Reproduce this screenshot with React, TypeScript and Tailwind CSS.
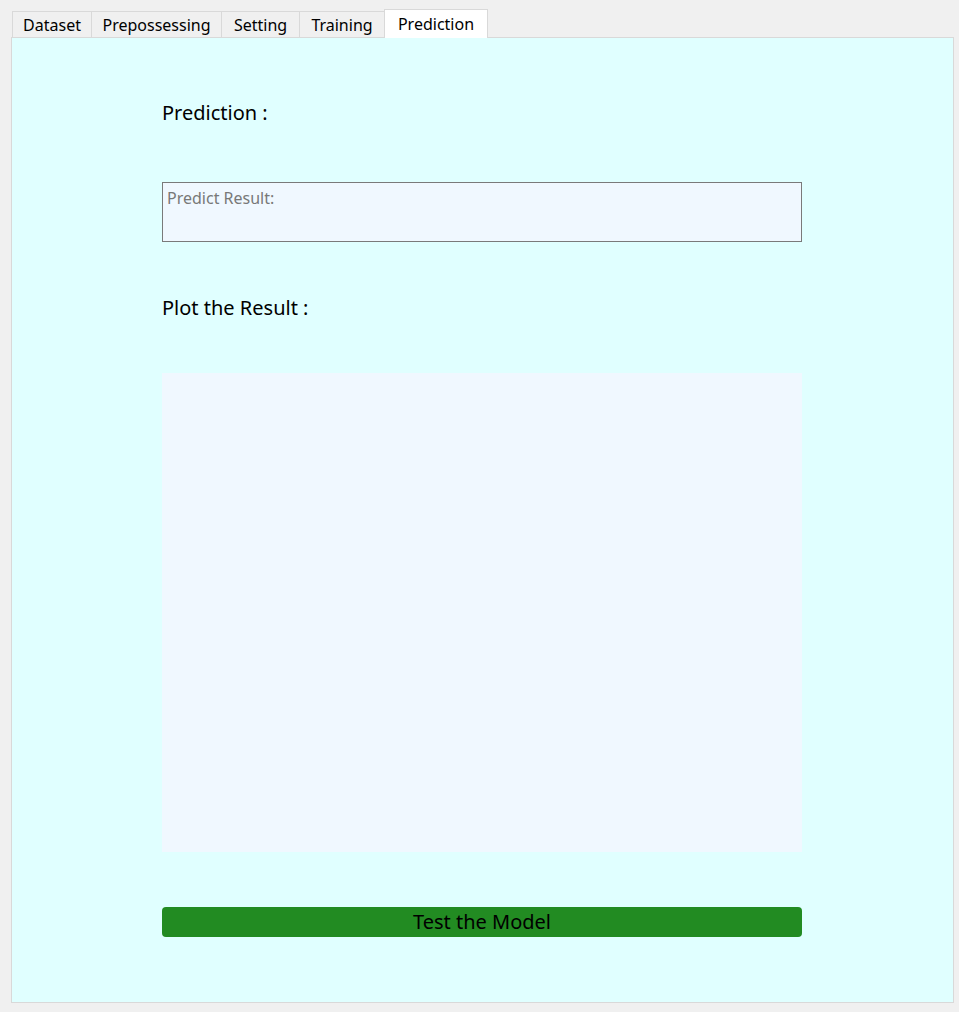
const tabs = [
  { name: 'Dataset', w: 'w-[80px]' },
  { name: 'Prepossessing', w: 'w-[131px]' },
  { name: 'Setting', w: 'w-[79px]' },
  { name: 'Training', w: 'w-[86px]' },
  { name: 'Prediction', w: 'w-[104px]' },
];

const App = () => {
  const active = 'Prediction';

  return (
    <div
      className="h-[1012px] w-[959px] bg-[#f0f0f0] pl-[11px] pt-[8px] text-black"
      style={{ fontFamily: '"Noto Sans", "Open Sans", sans-serif' }}
    >
      {/* tab strip */}
      <div className="flex h-[29px] items-end pl-[1px]">
        {tabs.map(t =>
          t.name === active ? (
            <div
              key={t.name}
              className={`relative z-10 -mb-[1px] -ml-[1px] flex h-[29px] items-center justify-center border border-b-0 border-[#d9d9d9] bg-white pb-[1px] text-[16px] ${t.w}`}
            >
              {t.name}
            </div>
          ) : (
            <div
              key={t.name}
              className={`-ml-[1px] flex h-[26px] items-center justify-center border border-b-0 border-[#d9d9d9] bg-[#f0f0f0] text-[16px] first:ml-0 ${t.w}`}
            >
              {t.name}
            </div>
          )
        )}
      </div>

      {/* panel */}
      <div className="h-[966px] w-[943px] border border-[#d9d9d9] bg-[#e0ffff]">
        <div className="ml-[150px] flex w-[640px] flex-col">
          <div className="mt-[61px] h-[28px] text-[20px] leading-[28px]">Prediction :</div>

          <div className="mt-[55px] h-[60px] border border-[#7a7a7a] bg-[#f0f8ff] px-[4px] pt-[3px] text-[16px] leading-[24px] text-[#787878]">
            Predict Result:
          </div>

          <div className="mt-[52px] h-[28px] text-[20px] leading-[28px]">Plot the Result :</div>

          <div className="mt-[51px] h-[479px] bg-[#f0f8ff]" />

          <button className="mt-[55px] h-[30px] rounded-[4px] bg-[#228b22] text-[20px] leading-[30px] text-black">
            Test the Model
          </button>
        </div>
      </div>
    </div>
  );
};

export default App;
